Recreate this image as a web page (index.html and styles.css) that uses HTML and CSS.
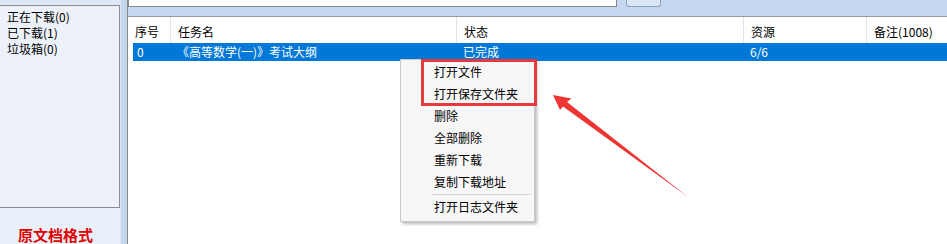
FILE: index.html
```html
<!DOCTYPE html>
<html lang="zh-CN">
<head>
<meta charset="utf-8">
<title>下载管理</title>
<link rel="stylesheet" href="styles.css">
</head>
<body>
<div class="app">
  <aside class="side">
    <div class="side-top"></div>
    <div class="tree">
      <div class="tree-item">正在下载(0)</div>
      <div class="tree-item">已下载(1)</div>
      <div class="tree-item">垃圾箱(0)</div>
    </div>
    <div class="side-foot">原文档格式</div>
  </aside>
  <div class="splitter"></div>
  <main class="main">
    <div class="toolbar">
      <div class="search"></div>
      <div class="btn"></div>
    </div>
    <div class="grid">
      <div class="head">
        <div class="hc">序号</div>
        <div class="hc">任务名</div>
        <div class="hc">状态</div>
        <div class="hc">资源</div>
        <div class="hc last">备注(1008)</div>
      </div>
      <div class="row sel">
        <div class="c first">0</div>
        <div class="c">《高等数学(一)》考试大纲</div>
        <div class="c">已完成</div>
        <div class="c">6/6</div>
        <div class="c"></div>
      </div>
    </div>
  </main>

  <div class="menu">
    <div class="mi">打开文件</div>
    <div class="mi">打开保存文件夹</div>
    <div class="mi">删除</div>
    <div class="mi">全部删除</div>
    <div class="mi">重新下载</div>
    <div class="mi">复制下载地址</div>
    <div class="msep"></div>
    <div class="mi">打开日志文件夹</div>
  </div>
  <div class="highlight"></div>
  <svg class="arrow" width="947" height="244" viewBox="0 0 947 244">
    <polygon points="553,95 571.5,98.5 567,102 688,197 563,106.5 560,110" fill="#ef3434"/>
  </svg>
</div>
</body>
</html>
```
FILE: styles.css
```css
* { box-sizing: border-box; }
html, body { margin: 0; padding: 0; background: #fff; }
body {
  font-family: "Noto Sans CJK SC", "Noto Sans", sans-serif;
  font-size: 12px;
  color: #000;
}
.app {
  position: relative;
  display: flex;
  width: 947px;
  height: 244px;
  overflow: hidden;
}
.side {
  width: 120px;
  display: flex;
  flex-direction: column;
  background: #eaf0f9;
}
.side-top { height: 5px; background: #dfe8f5; }
.tree {
  height: 206px;
  border: 1px solid #8e8e8e;
  border-left: none;
  background: #edf2fa;
  padding: 3px 0 0 7px;
}
.tree-item { line-height: 16px; height: 16px; white-space: nowrap; }
.side-foot {
  flex: 1;
  padding: 18px 0 0 18px;
  color: #e00000;
  font-weight: bold;
  font-size: 15px;
  line-height: 18px;
}
.splitter {
  width: 8px;
  background: #c3d7ef;
  border-left: 1px solid #dfe8f5;
  border-right: 1px solid #8a8a8a;
}
.main {
  flex: 1;
  display: flex;
  flex-direction: column;
}
.toolbar {
  height: 17px;
  display: flex;
  align-items: flex-start;
  background: #c5d8f0;
  border-bottom: 1px solid #9a9a9a;
}
.search {
  width: 489px;
  height: 7px;
  background: #fff;
  border: 1px solid #8a8a8a;
  border-top: none;
}
.btn {
  width: 35px;
  height: 7px;
  margin-left: 9px;
  background: #dbe6f4;
  border: 1px solid #8ea2bc;
  border-top: none;
  border-radius: 0 0 3px 3px;
}
.grid { flex: 1; background: #fff; }
.head {
  display: grid;
  grid-template-columns: 43px 286px 287px 123px 1fr;
  height: 26px;
}
.hc {
  padding: 7px 0 0 7px;
  line-height: 16px;
  border-right: 1px solid #e4e4e4;
  white-space: nowrap;
}
.hc.last { border-right: none; }
.row {
  display: grid;
  grid-template-columns: 38px 286px 287px 123px 1fr;
  margin-left: 5px;
  height: 18px;
  line-height: 18px;
}
.row.sel { background: #0078d7; color: #fff; }
.c { padding-left: 6px; white-space: nowrap; }
.c.first { padding-left: 4px; }

.menu {
  position: absolute;
  left: 400px;
  top: 59px;
  width: 135px;
  height: 163px;
  background: #f7f7f7;
  border: 1px solid #c8c8c8;
  box-shadow: 2px 2px 3px rgba(0,0,0,0.28);
  padding-top: 1px;
}
.mi {
  height: 22px;
  line-height: 22px;
  padding-left: 33px;
  white-space: nowrap;
}
.msep {
  height: 3px;
  margin: 0 3px 0 31px;
  border-top: 1px solid #d4d4d4;
  border-bottom: 1px solid #fff;
  margin-top: 1px;
  margin-bottom: -1px;
}
.highlight {
  position: absolute;
  left: 421px;
  top: 59px;
  width: 116px;
  height: 47px;
  border: 3px solid #e5393e;
}
.arrow {
  position: absolute;
  left: 0;
  top: 0;
  pointer-events: none;
}
```
